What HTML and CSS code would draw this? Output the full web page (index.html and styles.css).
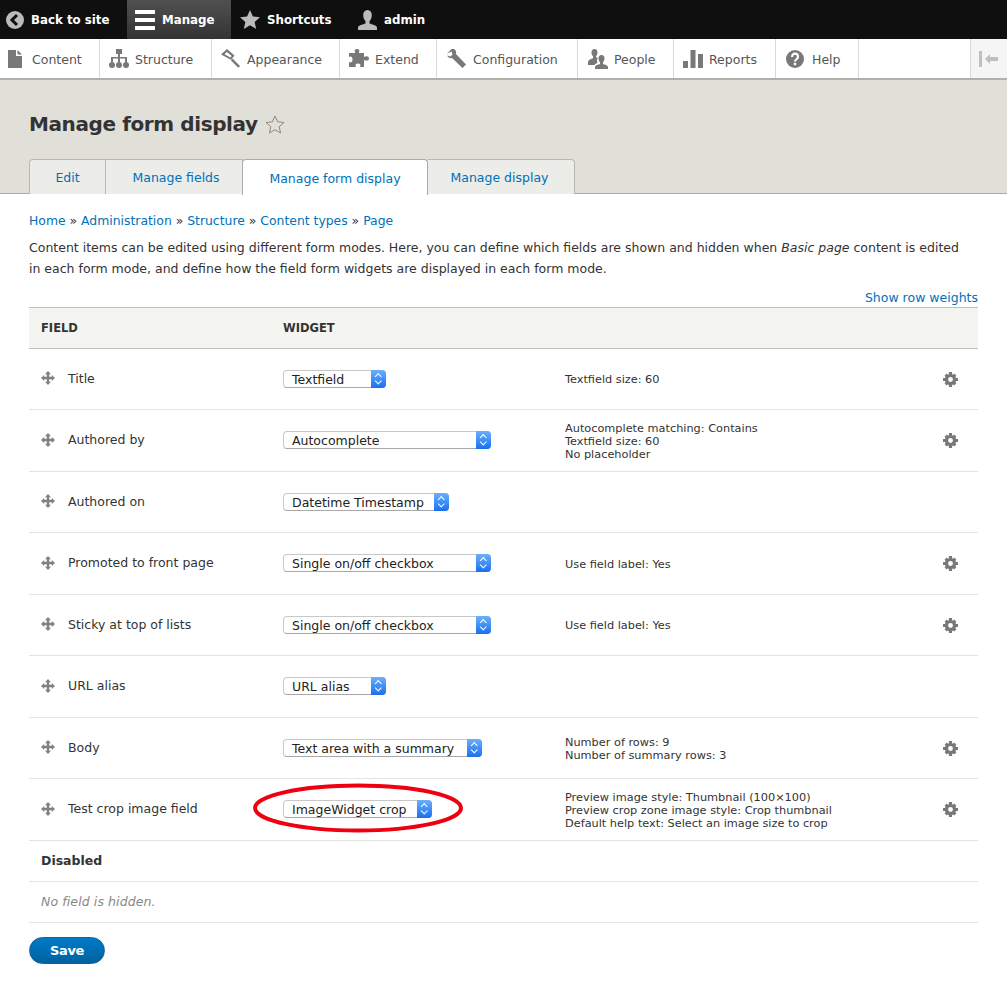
FILE: index.html
```html
<!DOCTYPE html>
<html lang="en">
<head>
  <meta charset="UTF-8">
  <title>Manage form display</title>
  <link rel="stylesheet" href="styles.css">
</head>
<body>
  <svg class="defs" width="0" height="0">
    <symbol id="grip" viewBox="0 0 14 14"><path d="M7 0l3 3.200H8.200v2.600h2.600V4L14 7l-3.200 3V8.200H8.200v2.600H10L7 14l-3-3.200h1.800V8.200H3.200V10L0 7l3.200-3v1.800h2.600V3.200H4z" fill="#808080"/></symbol>
    <symbol id="gear" viewBox="0 0 16 16"><circle cx="8" cy="8" r="4.300" fill="none" stroke="#787878" stroke-width="3.400"/><path d="M6.300 0h3.400v3H6.300zM6.300 13h3.400v3H6.300zM0 6.300h3v3.400H0zM13 6.300h3v3.400h-3zM1.700 4l2.300-2.300 2.300 2.300L4 6.300zM9.700 4L12 1.700 14.300 4 12 6.300zM1.700 12L4 14.300 6.300 12 4 9.700zM9.700 12l2.300 2.300 2.300-2.300L12 9.700z" fill="#787878"/></symbol>
  </svg>

  <nav class="toolbar">
    <a class="bar-item back"><svg width="18" height="18" viewBox="0 0 18 18"><circle cx="9" cy="9" r="9" fill="#bbb"/><path d="M11 4 6 9l5 5" fill="none" stroke="#111" stroke-width="3"/></svg>Back to site</a>
    <a class="bar-item manage"><svg width="20" height="20" viewBox="0 0 20 20"><path d="M1 0h18a1 1 0 0 1 0 4H1a1 1 0 0 1 0-4zM1 8h18a1 1 0 0 1 0 4H1a1 1 0 0 1 0-4zM1 16h18a1 1 0 0 1 0 4H1a1 1 0 0 1 0-4z" fill="#fff"/></svg>Manage</a>
    <a class="bar-item shortcuts"><svg width="20" height="19" viewBox="0 0 20 19"><path d="M10 0l2.900 6.500 7.100.7-5.400 4.700 1.600 7-6.200-3.700-6.200 3.700 1.600-7L0 7.200l7.100-.7z" fill="#bbb"/></svg>Shortcuts</a>
    <a class="bar-item admin"><svg width="19" height="20" viewBox="0 0 19 20"><path d="M9.500 0c2.700 0 4.300 2.200 4.300 5s-1.100 5-2.300 6.200v2.300c2 .8 7.500 1.700 7.500 4.200V20H0v-2.300c0-2.500 5.500-3.400 7.500-4.200v-2.300C6.300 10 5.200 7.800 5.200 5S6.800 0 9.500 0z" fill="#bbb"/></svg>admin</a>
  </nav>
  <nav class="tray">
    <a class="tray-item t-content"><svg width="14" height="18" viewBox="0 0 14 18"><path d="M0 0h8v6h6v12H0zM9.500 0 14 4.500H9.500z" fill="#787878"/></svg>Content</a>
    <a class="tray-item t-structure"><svg width="20" height="19" viewBox="0 0 20 19"><path d="M7 0h6v5H11v3h7v5h-2V9.500h-5V13H9V9.500H4V13H2V8h7V5H7z" fill="#787878"/><circle cx="3" cy="16" r="3" fill="#787878"/><circle cx="10" cy="16" r="3" fill="#787878"/><circle cx="17" cy="16" r="3" fill="#787878"/></svg>Structure</a>
    <a class="tray-item t-appearance"><svg width="20" height="19" viewBox="0 0 20 19"><path d="M6 0l7.500 6.500-3.500 4.300L0 5.500zM5.800 3 3.500 5.200l6 3.400 1.200-1.600z" fill="#787878" fill-rule="evenodd"/><path d="M11.500 9.500l7.500 7.500-1.700 1.700-7.500-7.500z" fill="#787878"/></svg>Appearance</a>
    <a class="tray-item t-extend"><svg width="20" height="19" viewBox="0 0 20 19"><path d="M0 4h6V3C5 1 6 0 8 0s3 1 2 3v1h5v4c2-1.200 5-1 5 1.500S17 12 15 11v7h-4c1-2 .5-3.500-2-3.500S6 16 7 18H0v-5c1 .8 3.500 1 3.500-2.500S1 7.200 0 8z" fill="#787878"/></svg>Extend</a>
    <a class="tray-item t-config"><svg width="19" height="19" viewBox="0 0 19 19"><path d="M0 4.500 4.500 0 7 0c2 1 2.500 3 2 5L19 15.500 15.500 19 5 9C3 9.500 1 8.500 0 6.500L3.500 7.500 5.500 5.500 4.500 2.500z" fill="#787878"/></svg>Configuration</a>
    <a class="tray-item t-people"><svg width="20" height="20" viewBox="0 0 20 20"><path d="M6.500 0c2 0 3 1.500 3 3.500 0 1.500-.7 3-1.500 3.800V8c.5.300 1.200.5 2 .8-1 1-1.500 3-.5 5-1 .5-2.500 1.200-3 2.200H0v-3c0-2 3.500-3 5-3.700V7.300C4.200 6.500 3.500 5 3.500 3.500c0-2 1-3.500 3-3.500z" fill="#787878"/><path d="M13.500 6c2 0 3 1.500 3 3.500 0 1.500-.6 2.800-1.500 3.700V15c1.500.7 5 1.300 5 3v2H7v-2c0-1.700 3.500-2.300 5-3v-1.800c-.9-.9-1.500-2.200-1.500-3.700 0-2 1-3.500 3-3.500z" fill="#787878"/></svg>People</a>
    <a class="tray-item t-reports"><svg width="20" height="18" viewBox="0 0 20 18"><path d="M0 11h5v7H0zM7.500 0h5v18h-5zM15 4h5v14h-5z" fill="#787878"/></svg>Reports</a>
    <a class="tray-item t-help"><svg width="18" height="18" viewBox="0 0 18 18"><circle cx="9" cy="9" r="9" fill="#787878"/><path d="M6 7c0-4.500 6-4.500 6 0 0 2.200-3 2.300-3 4.500" fill="none" stroke="#fff" stroke-width="2.200"/><rect x="7.800" y="12.800" width="2.400" height="2.400" fill="#fff"/></svg>Help</a>
    <a class="tray-toggle"><svg width="20" height="16" viewBox="0 0 20 16"><path d="M0 0h3v16H0zM6 8l5-5v3h8v4h-8v3z" fill="#bfbfbf"/></svg></a>
  </nav>

  <header class="page-head">
    <h1>Manage form display<svg class="title-star" width="20" height="19" viewBox="0 0 20 19"><path d="M10 1l2.600 5.800 6.400.7-4.800 4.200 1.400 6.300-5.600-3.300-5.600 3.300 1.400-6.300L1 7.500l6.400-.7z" fill="none" stroke="#8a8a7a"/></svg></h1>
    <ul class="tabs">
      <li class="tab tab-edit"><a>Edit</a></li>
      <li class="tab tab-fields"><a>Manage fields</a></li>
      <li class="tab tab-active"><a>Manage form display</a></li>
      <li class="tab tab-display"><a>Manage display</a></li>
    </ul>
  </header>

  <main class="content">
    <p class="breadcrumb"><a>Home</a> » <a>Administration</a> » <a>Structure</a> » <a>Content types</a> » <a>Page</a></p>
    <p class="intro">Content items can be edited using different form modes. Here, you can define which fields are shown and hidden when <em>Basic page</em> content is edited in each form mode, and define how the field form widgets are displayed in each form mode.</p>
    <p class="weights"><a>Show row weights</a></p>

    <div class="table">
      <div class="row head"><div class="c-field">FIELD</div><div class="c-widget">WIDGET</div></div>

      <div class="row">
        <div class="c-field"><svg class="grip" width="14" height="14"><use href="#grip"/></svg>Title</div>
        <div class="c-widget"><span class="select w-103">Textfield<i class="cap"></i></span></div>
        <div class="c-summary">Textfield size: 60</div>
        <div class="c-gear"><svg width="15" height="15"><use href="#gear"/></svg></div>
      </div>

      <div class="row">
        <div class="c-field"><svg class="grip" width="14" height="14"><use href="#grip"/></svg>Authored by</div>
        <div class="c-widget"><span class="select w-208">Autocomplete<i class="cap"></i></span></div>
        <div class="c-summary">Autocomplete matching: Contains<br>Textfield size: 60<br>No placeholder</div>
        <div class="c-gear"><svg width="15" height="15"><use href="#gear"/></svg></div>
      </div>

      <div class="row">
        <div class="c-field"><svg class="grip" width="14" height="14"><use href="#grip"/></svg>Authored on</div>
        <div class="c-widget"><span class="select w-166">Datetime Timestamp<i class="cap"></i></span></div>
        <div class="c-summary"></div>
        <div class="c-gear"></div>
      </div>

      <div class="row">
        <div class="c-field"><svg class="grip" width="14" height="14"><use href="#grip"/></svg>Promoted to front page</div>
        <div class="c-widget"><span class="select w-208">Single on/off checkbox<i class="cap"></i></span></div>
        <div class="c-summary">Use field label: Yes</div>
        <div class="c-gear"><svg width="15" height="15"><use href="#gear"/></svg></div>
      </div>

      <div class="row">
        <div class="c-field"><svg class="grip" width="14" height="14"><use href="#grip"/></svg>Sticky at top of lists</div>
        <div class="c-widget"><span class="select w-208">Single on/off checkbox<i class="cap"></i></span></div>
        <div class="c-summary">Use field label: Yes</div>
        <div class="c-gear"><svg width="15" height="15"><use href="#gear"/></svg></div>
      </div>

      <div class="row">
        <div class="c-field"><svg class="grip" width="14" height="14"><use href="#grip"/></svg>URL alias</div>
        <div class="c-widget"><span class="select w-103">URL alias<i class="cap"></i></span></div>
        <div class="c-summary"></div>
        <div class="c-gear"></div>
      </div>

      <div class="row">
        <div class="c-field"><svg class="grip" width="14" height="14"><use href="#grip"/></svg>Body</div>
        <div class="c-widget"><span class="select w-199">Text area with a summary<i class="cap"></i></span></div>
        <div class="c-summary">Number of rows: 9<br>Number of summary rows: 3</div>
        <div class="c-gear"><svg width="15" height="15"><use href="#gear"/></svg></div>
      </div>

      <div class="row">
        <div class="c-field"><svg class="grip" width="14" height="14"><use href="#grip"/></svg>Test crop image field</div>
        <div class="c-widget"><span class="select w-149">ImageWidget crop<i class="cap"></i></span>
          <svg class="ring" width="214" height="52" viewBox="0 0 214 52"><ellipse cx="107" cy="26" rx="103" ry="22.500" fill="none" stroke="#ee0010" stroke-width="4"/></svg>
        </div>
        <div class="c-summary">Preview image style: Thumbnail (100×100)<br>Preview crop zone image style: Crop thumbnail<br>Default help text: Select an image size to crop</div>
        <div class="c-gear"><svg width="15" height="15"><use href="#gear"/></svg></div>
      </div>

      <div class="row region"><strong>Disabled</strong></div>
      <div class="row region empty"><em>No field is hidden.</em></div>
    </div>

    <button class="save" type="button">Save</button>
  </main>
</body>
</html>
```

FILE: styles.css
```css
body { font-family: "DejaVu Sans", sans-serif; font-size: 12.5px; color: #333; margin: 0; padding: 0; background: #fff; }
a { color: #0071b8; text-decoration: none; }
.defs { position: absolute; }

.toolbar { display: flex; height: 39px; background: #0f0f0f; }
.bar-item { display: flex; align-items: center; gap: 7px; box-sizing: border-box; padding-top: 1px; color: #fff; font-weight: bold; font-size: 11.8px; }
.bar-item svg { flex: none; margin-top: -1px; }
.back { width: 127px; padding-left: 6px; }
.manage { width: 104px; padding-left: 8px; background: linear-gradient(#505050, #333); }
.shortcuts { width: 118px; padding-left: 9px; }
.admin { padding-left: 9px; }

.tray { display: flex; height: 39px; background: #fff; border-bottom: 2px solid #b0b0ac; }
.tray-item { display: grid; grid-template-columns: 26px auto; justify-content: start; align-items: center; box-sizing: border-box; padding: 1px 0 0 9px; color: #555; border-right: 1px solid #d8d8d8; white-space: nowrap; }
.tray-item svg { margin-top: -1px; }
.t-content { width: 100px; padding-left: 8px; grid-template-columns: 24px auto; }
.t-structure { width: 112px; }
.t-appearance { width: 128px; }
.t-extend { width: 97px; }
.t-config { width: 141px; padding-left: 10px; }
.t-people { width: 96px; padding-left: 10px; }
.t-reports { width: 102px; }
.t-help { width: 83px; padding-left: 10px; }
.tray-toggle { display: flex; align-items: center; justify-content: center; width: 36px; margin-left: auto; background: #f5f5f5; border-left: 1px solid #d8d8d8; }

.page-head { background: #e0e0d8; height: 113px; border-bottom: 1px solid #aaa; display: flex; flex-direction: column; padding: 0 29px; }
h1 { margin: 30px 0 0; font-size: 20px; letter-spacing: -0.4px; line-height: 28px; font-weight: bold; color: #333; display: flex; align-items: center; gap: 7px; }
.tabs { list-style: none; margin: 21px 0 0; padding: 0; display: flex; height: 35px; }
.tab { flex: none; border: 1px solid #b8b8b0; border-bottom: 0; border-left-width: 0; background: #ecece8; display: flex; align-items: center; justify-content: center; box-sizing: border-box; }
.tab-edit { width: 77px; border-left-width: 1px; border-radius: 4px 0 0 0; }
.tab-fields { width: 137px; padding-left: 4px; }
.tab-active { width: 186px; background: #fff; height: 36px; padding-top: 1px; border: 1px solid #aaa; border-bottom: 0; border-radius: 4px 4px 0 0; margin-left: -1px; }
.tab-display { width: 147px; padding-right: 3px; border-radius: 0 4px 0 0; }

.content { padding: 0 29px; }
.breadcrumb { margin: 18px 0 0; line-height: 18px; font-size: 12.4px; }
.intro { margin: 7px 0 0; line-height: 21px; max-width: 940px; }
.weights { margin: 10px 0 0; text-align: right; line-height: 18px; }

.row { display: flex; align-items: center; height: 61.5px; border-bottom: 1px solid #e4e4e0; box-sizing: border-box; }
.row.head { height: 41.5px; padding-top: 1px; background: #f4f4f0; border-top: 1px solid #bfbfba; border-bottom: 1px solid #bfbfba; font-weight: bold; font-size: 11.5px; }
.c-field { width: 254px; padding: 0 0 1px 12px; box-sizing: border-box; display: flex; align-items: center; }
.grip { margin-right: 13px; flex: none; }
.c-widget { width: 282px; position: relative; display: flex; align-items: center; }
.c-summary { flex: 1; font-size: 11.3px; line-height: 13px; color: #333; padding-top: 2px; }
.c-gear { width: 56px; padding-top: 1px; display: flex; justify-content: center; }

.select { position: relative; display: block; height: 18px; line-height: 17px; padding-left: 8px; box-sizing: border-box; border: 1px solid #c8c8c8; border-bottom-color: #a8a8a8; border-radius: 4px; background: #fff; color: #222; }
.cap { position: absolute; right: -1px; top: -1px; width: 15px; height: 18px; border-radius: 0 4px 4px 0; background: linear-gradient(#6cb0fb, #1a6ff0); }
.cap::before, .cap::after { content: ""; position: absolute; left: 5px; width: 3.5px; height: 3.5px; border: solid #fff; border-width: 1px 0 0 1px; transform: rotate(45deg); }
.cap::before { top: 4px; }
.cap::after { top: 9px; transform: rotate(225deg); }
.w-103 { width: 103px; }
.w-149 { width: 149px; }
.w-166 { width: 166px; }
.w-199 { width: 199px; }
.w-208 { width: 208px; }
.ring { position: absolute; left: -32px; top: 50%; margin-top: -27.5px; pointer-events: none; }

.row.region { height: 41px; padding-left: 12px; }
.row.empty em { color: #888; letter-spacing: 0.1px; }

.save { display: block; margin: 14px 0 0; width: 76px; height: 27px; padding: 0; border: 1px solid #1a5f92; border-radius: 14px; background: linear-gradient(#007bc6, #0062a0); color: #fff; font-family: inherit; font-size: 13px; letter-spacing: -0.3px; font-weight: bold; }
```
